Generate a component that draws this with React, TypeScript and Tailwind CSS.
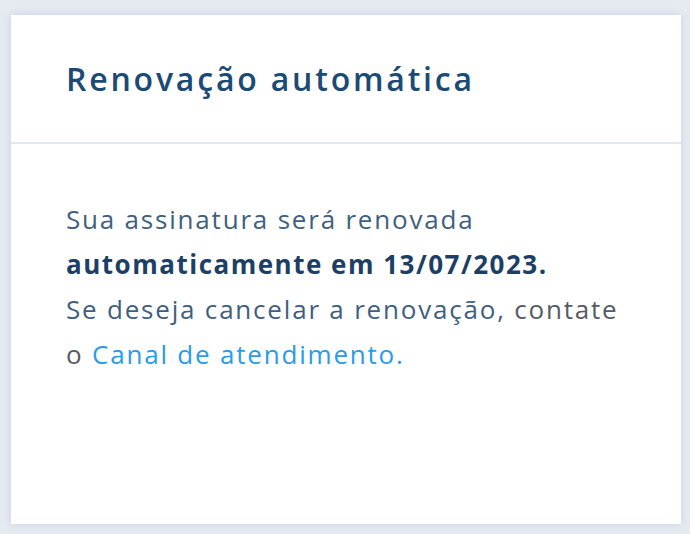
export default function App() {
  return (
    <div className="w-[690px] h-[534px] bg-[#e6ebf2] pt-[15px] pl-[11px]" style={{ fontFamily: "'Open Sans', sans-serif" }}>
      <div className="w-[670px] h-[509px] bg-white shadow-[0_0_8px_rgba(180,192,212,0.6)] flex flex-col">
        <div className="h-[129px] border-b-2 border-[#e3e8f0] pl-[55px] flex items-center">
          <h1 className="text-[32px] text-[#1b4a74] font-semibold tracking-[2.8px]">Renovação automática</h1>
        </div>
        <div className="pl-[55px] pt-[53px] text-[26px] leading-[45px] tracking-[1.8px] text-[#3f5f80]">
          <p>Sua assinatura será renovada</p>
          <p className="font-bold text-[#1d3f66] tracking-[1.5px]">automaticamente em 13/07/2023.</p>
          <p>Se deseja cancelar a renovação, <span className="text-[#555b63]">contate</span></p>
          <p><span className="text-[#555b63]">o</span> <span className="text-[#2a9bea]">Canal de atendimento.</span></p>
        </div>
      </div>
    </div>
  );
}
